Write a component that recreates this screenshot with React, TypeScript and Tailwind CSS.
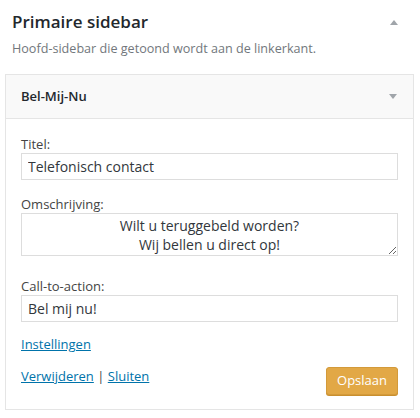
import React from "react";

const SidebarWidget: React.FC = () => {
  return (
    <div className="w-[420px] h-[418px] bg-white font-['Open_Sans',sans-serif] text-[#444] overflow-hidden">
      {/* Sidebar title */}
      <div className="flex items-center justify-between pl-3 pr-[22px] pt-[10px]">
        <h2 className="text-[17px] leading-6 font-semibold text-[#23282d]">Primaire sidebar</h2>
        <span className="block w-0 h-0 border-x-[4px] border-x-transparent border-b-[5px] border-b-[#a0a5aa]" />
      </div>
      <p className="pl-3 mt-[6px] text-[12.6px] leading-[18px] text-[#72777c]">
        Hoofd-sidebar die getoond wordt aan de linkerkant.
      </p>

      {/* Widget */}
      <div className="ml-[5px] mr-[6px] mt-[16px] border border-[#e5e5e5] bg-white">
        <div className="h-[44px] flex items-center justify-between pl-[15px] pr-[16px] bg-[#f9f9f9] border-b border-[#e5e5e5]">
          <span className="text-[13px] font-semibold text-[#23282d]">Bel-Mij-Nu</span>
          <span className="block w-0 h-0 border-x-[4px] border-x-transparent border-t-[5px] border-t-[#a0a5aa]" />
        </div>

        <div className="px-[15px] pt-[16px] pb-[14px]">
          <label className="block text-[13px] leading-[18px]">Titel:</label>
          <input
            readOnly
            value="Telefonisch contact"
            className="block w-full h-[27px] px-[6px] border border-[#ddd] text-[14px] text-[#32373c] outline-none"
          />

          <label className="block mt-[15px] text-[13px] leading-[18px]">Omschrijving:</label>
          <textarea
            readOnly
            value={"Wilt u teruggebeld worden?\nWij bellen u direct op!"}
            className="block w-full h-[43px] px-[6px] py-[2px] border border-[#ddd] text-[14px] leading-[19px] text-center text-[#32373c] outline-none resize-y"
          />

          <label className="block mt-[21px] text-[13px] leading-[18px]">Call-to-action:</label>
          <input
            readOnly
            value="Bel mij nu!"
            className="block w-full h-[27px] px-[6px] border border-[#ddd] text-[14px] text-[#32373c] outline-none"
          />

          <div className="mt-[13px] text-[13px] leading-[18px]">
            <a href="#" className="text-[#0073aa] underline">Instellingen</a>
          </div>

          <div className="mt-[14px] flex items-start justify-between">
            <div className="text-[13px] leading-[18px]">
              <a href="#" className="text-[#0073aa] underline">Verwijderen</a>
              <span className="text-[#444]"> | </span>
              <a href="#" className="text-[#0073aa] underline">Sluiten</a>
            </div>
            <button className="h-[28px] px-[10px] rounded-[3px] bg-[#e2a846] border border-[#d39a3a] text-white text-[13px] shadow-[0_1px_0_#c98f2f]">
              Opslaan
            </button>
          </div>
        </div>
      </div>
    </div>
  );
};

export default function App() {
  return <SidebarWidget />;
}
